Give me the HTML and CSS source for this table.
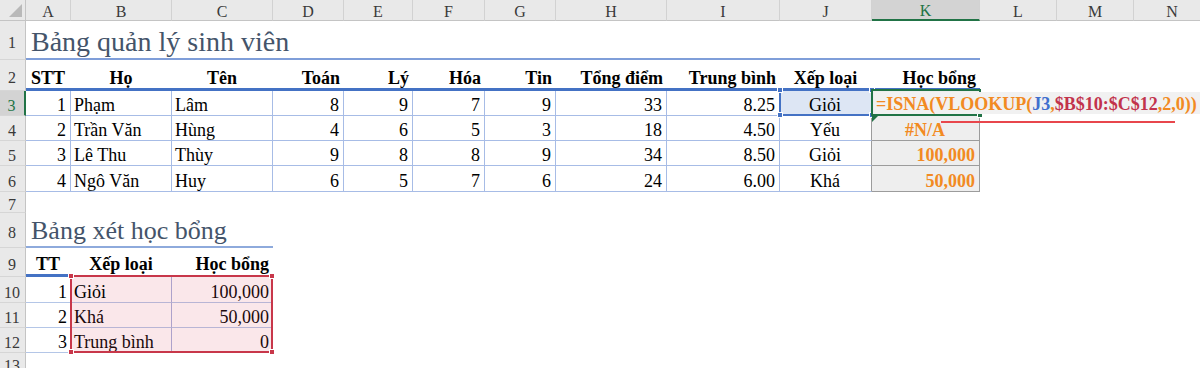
FILE: index.html
```html
<!DOCTYPE html>
<html lang="vi">
<head>
<meta charset="utf-8">
<title>Bảng quản lý sinh viên</title>
<link rel="stylesheet" href="styles.css">
</head>
<body>
<div class="sheet">
  <!-- column headings -->
  <div class="corner"></div>
  <div class="c ch">A</div>
  <div class="c ch">B</div>
  <div class="c ch">C</div>
  <div class="c ch">D</div>
  <div class="c ch">E</div>
  <div class="c ch">F</div>
  <div class="c ch">G</div>
  <div class="c ch">H</div>
  <div class="c ch">I</div>
  <div class="c ch">J</div>
  <div class="c ch ch-active">K</div>
  <div class="c ch">L</div>
  <div class="c ch">M</div>
  <div class="c ch">N</div>

  <!-- row 1 -->
  <div class="c rh">1</div>
  <div class="c title span11">Bảng quản lý sinh viên</div>
  <div class="c span3"></div>

  <!-- row 2 -->
  <div class="c rh">2</div>
  <div class="c hd m">STT</div>
  <div class="c hd m">Họ</div>
  <div class="c hd m">Tên</div>
  <div class="c hd r">Toán</div>
  <div class="c hd r">Lý</div>
  <div class="c hd r">Hóa</div>
  <div class="c hd r">Tin</div>
  <div class="c hd r">Tổng điểm</div>
  <div class="c hd r">Trung bình</div>
  <div class="c hd m">Xếp loại</div>
  <div class="c hd r">Học bổng</div>
  <div class="c span3"></div>

  <!-- row 3 -->
  <div class="c rh rh-active">3</div>
  <div class="c t r">1</div>
  <div class="c t">Phạm</div>
  <div class="c t">Lâm</div>
  <div class="c t r">8</div>
  <div class="c t r">9</div>
  <div class="c t r">7</div>
  <div class="c t r">9</div>
  <div class="c t r">33</div>
  <div class="c t r">8.25</div>
  <div class="c t m ref-host"><span class="txt">Giỏi</span><span class="ref ref-blue"><i class="hnd tl"></i><i class="hnd tr"></i><i class="hnd bl"></i><i class="hnd br"></i></span></div>
  <div class="c k edit-host">
    <span class="active-cell"><i class="fill"></i></span>
    <span class="edit"><span class="fo">=ISNA(VLOOKUP(</span><span class="fb">J3</span><span class="fo">,</span><span class="fr">$B$10:$C$12</span><span class="fo">,2,0))</span><span class="caret"></span></span>
  </div>
  <div class="c span3"></div>

  <!-- row 4 -->
  <div class="c rh">4</div>
  <div class="c t r">2</div>
  <div class="c t">Trần Văn</div>
  <div class="c t">Hùng</div>
  <div class="c t r">4</div>
  <div class="c t r">6</div>
  <div class="c t r">5</div>
  <div class="c t r">3</div>
  <div class="c t r">18</div>
  <div class="c t r">4.50</div>
  <div class="c t tj m">Yếu</div>
  <div class="c k m fo flag-host">#N/A<i class="err-flag"></i><i class="underline"></i></div>
  <div class="c span3"></div>

  <!-- row 5 -->
  <div class="c rh">5</div>
  <div class="c t r">3</div>
  <div class="c t">Lê Thu</div>
  <div class="c t">Thùy</div>
  <div class="c t r">9</div>
  <div class="c t r">8</div>
  <div class="c t r">8</div>
  <div class="c t r">9</div>
  <div class="c t r">34</div>
  <div class="c t r">8.50</div>
  <div class="c t tj m">Giỏi</div>
  <div class="c k r fo">100,000</div>
  <div class="c span3"></div>

  <!-- row 6 -->
  <div class="c rh">6</div>
  <div class="c t r">4</div>
  <div class="c t">Ngô Văn</div>
  <div class="c t">Huy</div>
  <div class="c t r">6</div>
  <div class="c t r">5</div>
  <div class="c t r">7</div>
  <div class="c t r">6</div>
  <div class="c t r">24</div>
  <div class="c t r">6.00</div>
  <div class="c t tj m">Khá</div>
  <div class="c k r fo">50,000</div>
  <div class="c span3"></div>

  <!-- row 7 -->
  <div class="c rh">7</div>
  <div class="c span14"></div>

  <!-- row 8 -->
  <div class="c rh">8</div>
  <div class="c subtitle span3">Bảng xét học bổng</div>
  <div class="c span11"></div>

  <!-- row 9 -->
  <div class="c rh">9</div>
  <div class="c hd m">TT</div>
  <div class="c hd hd-hidden m">Xếp loại</div>
  <div class="c hd hd-hidden r">Học bổng</div>
  <div class="c span11"></div>

  <!-- row 10 -->
  <div class="c rh">10</div>
  <div class="c t2 r">1</div>
  <div class="c t2 tb ref-host"><span class="txt">Giỏi</span><span class="ref ref-red"><i class="hnd tl"></i><i class="hnd tr"></i><i class="hnd bl"></i><i class="hnd br"></i></span></div>
  <div class="c t2 r">100,000</div>
  <div class="c span11"></div>

  <!-- row 11 -->
  <div class="c rh">11</div>
  <div class="c t2 r">2</div>
  <div class="c t2 tb">Khá</div>
  <div class="c t2 r">50,000</div>
  <div class="c span11"></div>

  <!-- row 12 -->
  <div class="c rh">12</div>
  <div class="c t2 r">3</div>
  <div class="c t2 tb">Trung bình</div>
  <div class="c t2 r">0</div>
  <div class="c span11"></div>

  <!-- row 13 -->
  <div class="c rh">13</div>
  <div class="c span14"></div>
</div>
</body>
</html>
```

FILE: styles.css
```css
* { box-sizing: border-box; }

html, body {
  margin: 0;
  padding: 0;
  background: #fff;
  overflow: hidden;
}

body {
  font-family: "Liberation Serif", "Times New Roman", serif;
  color: #000;
}

/* worksheet grid: row-heading column + columns A..N */
.sheet {
  display: grid;
  grid-template-columns: 26px 45px 101px 101px 71px 69px 72px 71px 111px 113px 92px 108px 77px 77px 77px;
  grid-template-rows: 21px 39px 31px 25px 25px 25px 26px 21px 35px 29px 26px 25px 25px 20px;
  width: 1200px;
  height: 368px;
  overflow: hidden;
}

.c {
  display: flex;
  align-items: flex-end;
  padding: 0 4px 0 3px;
  font-size: 18px;
  line-height: 19px;
  white-space: nowrap;
  min-width: 0;
}
.r { justify-content: flex-end; }
.m { justify-content: center; }

.span3 { grid-column: span 3; }
.span11 { grid-column: span 11; }
.span14 { grid-column: span 14; }

/* headings */
.corner {
  background: #e9e9e9;
  border-right: 1px solid #c4c4c4;
  border-bottom: 1px solid #c4c4c4;
  position: relative;
}
.corner::after {
  content: "";
  position: absolute;
  right: 3px;
  bottom: 3px;
  width: 13px;
  height: 13px;
  background: #b9b9b9;
  clip-path: polygon(100% 0, 100% 100%, 0 100%);
}

.ch {
  background: #e9e9e9;
  border-right: 1px solid #d2d2d2;
  border-bottom: 1px solid #c4c4c4;
  justify-content: center;
  align-items: center;
  padding: 2px 0 0;
  font-size: 16px;
  color: #3a3a3a;
}
.ch-active {
  background: #d3d3d3;
  color: #217346;
  border-bottom: 2px solid #217346;
}

.rh {
  background: #e9e9e9;
  border-right: 1px solid #c4c4c4;
  border-bottom: 1px solid #d6d6d6;
  justify-content: center;
  align-items: center;
  padding: 5px 1px 0 0;
  font-size: 16px;
  color: #3a3a3a;
}
.rh-active {
  background: #d3d3d3;
  color: #217346;
  border-right: 2px solid #217346;
}

/* titles */
.title {
  font-size: 28px;
  line-height: 32px;
  color: #44546a;
  padding-left: 5px;
  border-bottom: 2px solid #7f9ed9;
}
.subtitle {
  font-size: 26px;
  line-height: 30px;
  color: #44546a;
  padding-left: 5px;
  border-bottom: 2px solid #8eaadc;
}

/* header row */
.hd {
  font-weight: bold;
  border-bottom: 3px solid #4472c4;
}
.hd-hidden { border-bottom-color: transparent; }

/* table body cells */
.t {
  border-right: 1px solid #a7bce6;
  border-bottom: 1px solid #a7bce6;
}
.tj { border-right-color: #9c9c9c; }
.t2 {
  border-bottom: 1px solid #b4c6e7;
}
.t2.tb { border-right: 1px solid #a7b0dc; }

/* result column */
.k {
  background: #eeeeee;
  border-right: 1px solid #9c9c9c;
  border-bottom: 1px solid #9c9c9c;
}
.fo { color: #f28a22; font-weight: bold; }
.fb { color: #3f6fce; font-weight: bold; }
.fr { color: #c2334c; font-weight: bold; }

/* referenced ranges highlighted while editing */
.ref-host { position: relative; }
.ref-host .txt { position: relative; z-index: 3; }
.ref {
  position: absolute;
  z-index: 2;
}
.ref-blue {
  left: -1px;
  top: -2px;
  width: 94px;
  height: 27px;
  border: 2px solid #4472c4;
  background: rgba(68, 114, 196, 0.18);
}
.ref-red {
  left: -1px;
  top: -2px;
  width: 203px;
  height: 78px;
  border: 2px solid #c8374a;
  background: rgba(214, 70, 92, 0.13);
}
.hnd {
  position: absolute;
  width: 6px;
  height: 6px;
  border: 1px solid #fff;
}
.ref-blue .hnd { background: #4472c4; }
.ref-red .hnd { background: #c8374a; }
.hnd.tl { left: -4px; top: -4px; }
.hnd.tr { right: -4px; top: -4px; }
.hnd.bl { left: -4px; bottom: -4px; }
.hnd.br { right: -4px; bottom: -4px; }

/* cell being edited */
.edit-host {
  position: relative;
  z-index: 4;
  overflow: visible;
  padding: 0 0 0 2px;
  align-items: center;
}
.active-cell {
  position: absolute;
  left: -1px;
  top: -2px;
  width: 110px;
  height: 27px;
  border: 2px solid #217346;
}
.active-cell .fill {
  position: absolute;
  right: -4px;
  bottom: -4px;
  width: 6px;
  height: 6px;
  background: #217346;
  border: 1px solid #fff;
}
.edit {
  position: relative;
  flex: none;
  display: block;
  height: 22px;
  padding: 2px 4px 0 2px;
  line-height: 20px;
  background: #f1f1f1;
}
.caret {
  display: inline-block;
  width: 1px;
  height: 20px;
  margin-left: 3px;
  vertical-align: -4px;
  background: #111;
}

.flag-host { position: relative; overflow: visible; z-index: 3; }
.err-flag {
  position: absolute;
  left: 0;
  top: 0;
  width: 6px;
  height: 6px;
  background: #217346;
  clip-path: polygon(0 0, 100% 0, 0 100%);
}
.underline {
  position: absolute;
  left: 69px;
  top: 5px;
  width: 234px;
  height: 2px;
  background: #e8464c;
}
```
